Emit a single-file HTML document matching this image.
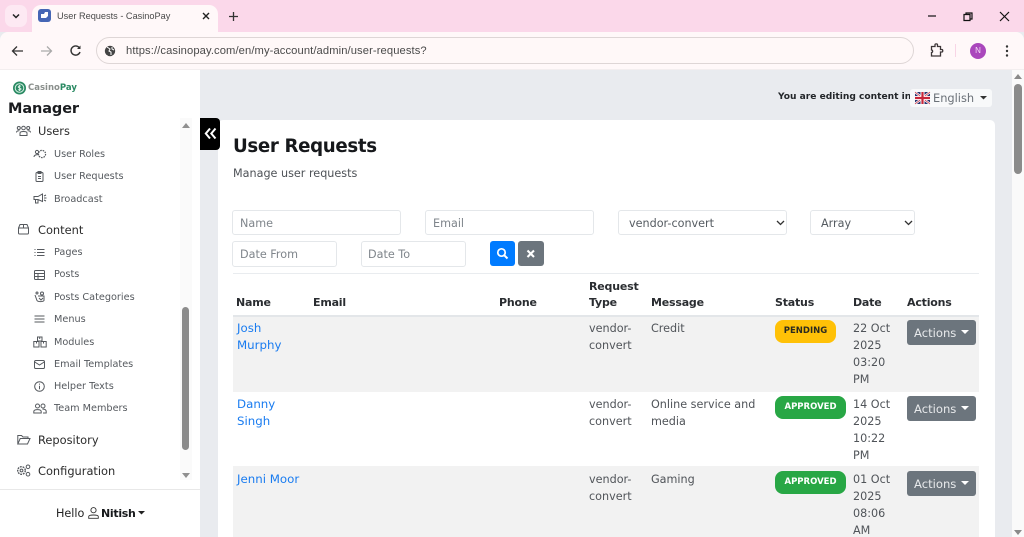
<!DOCTYPE html>
<html lang="en"><head><meta charset="utf-8"><title>User Requests - CasinoPay</title>
<style>
html,body{margin:0;padding:0;width:1024px;height:537px;overflow:hidden;background:#e9ebef}
*{box-sizing:border-box}
body{font-family:"DejaVu Sans","Liberation Sans",sans-serif;color:#4b4f54;position:relative}
.a{position:absolute}
.t{position:absolute;white-space:nowrap;line-height:1}
.lib{font-family:"Liberation Sans",sans-serif}
.s{position:absolute;white-space:nowrap;font-size:9.7px;line-height:12px;color:#55595e;left:54px;margin-top:1px}
.m{position:absolute;white-space:nowrap;font-size:11.4px;line-height:14px;color:#2b2b2b;left:38px}
.c{position:absolute;white-space:nowrap;font-size:11.2px;line-height:17px;color:#505459}
.l{font-size:11.8px;color:#1a7cf0;left:237px}
.h{position:absolute;white-space:nowrap;font-size:11px;line-height:16px;font-weight:bold;color:#2a2d31;letter-spacing:-.2px;margin-top:1px}
.in{position:absolute;background:#fff;border:1px solid #e4e7ea;border-radius:3px;font-size:11.2px;color:#7f858b;line-height:25px;padding-left:7px;white-space:nowrap}
.badge{position:absolute;left:775px;height:23px;border-radius:8px;font-size:8.5px;font-weight:bold;line-height:22px;text-align:center}
.btn{position:absolute;left:907px;width:69px;height:25px;background:#6c757d;border-radius:3px;color:#e8eaec;font-size:11.6px;line-height:26px;padding-left:7px}
.btn:after{content:"";position:absolute;left:54px;top:10px;border:4px solid transparent;border-top-color:#fff;border-bottom:0}
svg{position:absolute;overflow:visible}
.ic{fill:none;stroke:#55595e;stroke-width:1}
</style></head><body>

<!-- browser chrome -->
<div class="a" style="left:0;top:0;width:1024px;height:32px;background:#fbd8ea"></div>
<div class="a" style="left:0;top:32px;width:1024px;height:37px;background:#fff8f9;border-radius:8px 8px 0 0"></div>
<div class="a" style="left:0;top:69px;width:1024px;height:1px;background:#f3eeef"></div>
<div class="a" style="left:5px;top:5px;width:22px;height:22px;background:#fde9f3;border-radius:7px"></div>
<svg style="left:11px;top:12px" width="10" height="8"><path d="M2 2.5L5 5.5L8 2.5" fill="none" stroke="#222" stroke-width="1.5"/></svg>
<div class="a" style="left:32px;top:5px;width:186px;height:28px;background:#fff8f9;border-radius:9px 9px 0 0"></div>
<div class="a" style="left:38px;top:9px;width:13px;height:13px;background:#4566b5;border-radius:3px"></div>
<svg style="left:40px;top:11px" width="9" height="9"><path d="M1 3h3l1-2h3v4l-2 2H1z" fill="#fff"/></svg>
<div class="t lib" style="left:57px;top:12px;font-size:9.2px;color:#4a4a4a">User Requests - CasinoPay</div>
<svg style="left:201px;top:11px" width="10" height="10"><path d="M2 2L8 8M8 2L2 8" stroke="#222" stroke-width="1.4"/></svg>
<svg style="left:228px;top:11px" width="11" height="11"><path d="M5.5 1V10M1 5.5H10" stroke="#333" stroke-width="1.3"/></svg>
<svg style="left:927px;top:11px" width="85" height="11"><path d="M1 5H9" stroke="#111" stroke-width="1.2"/><path d="M37 3.5h6v6h-6zM39 3.5V2h6v6h-2" fill="none" stroke="#111" stroke-width="1.2"/><path d="M73 1L82 10M82 1L73 10" stroke="#111" stroke-width="1.2"/></svg>
<svg style="left:11px;top:44px" width="80" height="14"><path d="M12 7H2M6 2.5L1.5 7L6 11.5" fill="none" stroke="#333" stroke-width="1.3"/><path d="M30 7H40M36 2.5L40.5 7L36 11.5" fill="none" stroke="#aaa" stroke-width="1.3"/><path d="M68.2 3.6A4.6 4.6 0 1 0 69 8" fill="none" stroke="#333" stroke-width="1.4"/><path d="M69.5 1.5V5H66z" fill="#333"/></svg>
<div class="a" style="left:96px;top:37px;width:818px;height:27px;background:#fff8f8;border:1px solid #ded6d6;border-radius:14px"></div>
<svg style="left:104px;top:45px" width="12" height="12"><circle cx="6" cy="6" r="5.2" fill="#444"/><path d="M3 2l3 2-1 2 2 1v3M8 2v2l2 1" fill="none" stroke="#fff" stroke-width="1"/></svg>
<div class="t lib" style="left:126px;top:46px;font-size:11.2px;letter-spacing:.1px;color:#4a4a4a">https://casinopay.com/en/my-account/admin/user-requests?</div>
<svg style="left:929px;top:43px" width="14" height="15"><path d="M2.5 3.5H6V1.8C6 .6 8.5.6 8.5 1.8V3.5H11.5V6.5H13C14 6.5 14 9 13 9H11.5V13H2.5V9.5C4 9.5 4 7 2.5 7z" fill="none" stroke="#3d3638" stroke-width="1.3"/></svg>
<div class="a" style="left:955px;top:44px;width:1px;height:13px;background:#f8d5e6"></div>
<div class="a" style="left:970px;top:43px;width:16px;height:16px;border-radius:50%;background:#aa47bc;color:#f4dff7;font:8px/16px 'Liberation Sans',sans-serif;text-align:center">N</div>
<svg style="left:1005px;top:45px" width="4" height="12"><circle cx="2" cy="1.5" r="1.2" fill="#333"/><circle cx="2" cy="6" r="1.2" fill="#333"/><circle cx="2" cy="10.5" r="1.2" fill="#333"/></svg>

<!-- page scrollbar -->
<div class="a" style="left:1012px;top:70px;width:12px;height:467px;background:#fafafa"></div>
<svg style="left:1013px;top:73px" width="10" height="7"><path d="M1 6L5 1L9 6z" fill="#8a8a8a"/></svg>
<div class="a" style="left:1014px;top:84px;width:8px;height:90px;background:#8b8b8b;border-radius:4px"></div>
<svg style="left:1013px;top:529px" width="10" height="7"><path d="M1 1L5 6L9 1z" fill="#8a8a8a"/></svg>

<!-- sidebar -->
<div class="a" style="left:0;top:70px;width:200px;height:467px;background:#fff"></div>
<svg style="left:13px;top:81px" width="14" height="14"><circle cx="6.5" cy="7" r="6.5" fill="#2a8a63"/><circle cx="6.5" cy="7" r="4.3" fill="none" stroke="#d6efe3" stroke-width="1"/><path d="M8 5.3C7 4.5 5.2 4.8 5.2 6C5.2 7.4 8 6.6 8 8C8 9.2 6 9.4 5 8.6M6.5 4V10" fill="none" stroke="#e8f7f0" stroke-width=".8"/></svg>
<div class="t" style="left:28px;top:84px;font-size:8.5px;font-weight:bold;color:#8a8f8c">Casino<span style="color:#2a8a63">Pay</span></div>
<div class="t" style="left:8px;top:102px;font-size:14.5px;font-weight:bold;color:#1a1c1f;letter-spacing:-.1px">Manager</div>

<div class="a" style="left:180px;top:118px;width:12px;height:362px;background:#fafafa"></div>
<svg style="left:181px;top:122px" width="10" height="7"><path d="M1 6L5 1L9 6z" fill="#8f8f8f"/></svg>
<div class="a" style="left:182px;top:307px;width:7px;height:143px;background:#8b8b8b;border-radius:4px"></div>
<svg style="left:181px;top:472px" width="10" height="7"><path d="M1 1L5 6L9 1z" fill="#8f8f8f"/></svg>

<svg style="left:16px;top:125px" width="15" height="12" class="ic"><circle cx="7.5" cy="3" r="1.8"/><circle cx="2.8" cy="3" r="1.5"/><circle cx="12.2" cy="3" r="1.5"/><path d="M4 10.5V8C4 6 11 6 11 8V10.5zM.5 7.5C.5 6 2 5.6 3.5 5.8M14.5 7.5C14.5 6 13 5.6 11.5 5.8"/></svg>
<div class="m" style="top:124px">Users</div>
<svg style="left:33px;top:149px" width="14" height="10" class="ic"><circle cx="9" cy="5" r="3.6" stroke-dasharray="1.6 .9" stroke-width="1.2"/><circle cx="4" cy="3" r="1.6"/><path d="M1 8C1 6 4 5 6 6"/></svg>
<div class="s" style="top:148px">User Roles</div>
<svg style="left:35px;top:171px" width="9" height="11" class="ic"><rect x="1" y="1.5" width="7" height="9" rx="1"/><rect x="3" y=".5" width="3" height="2" fill="#55595e"/><path d="M3 5.5H6M3 7.5H6"/></svg>
<div class="s" style="top:170px">User Requests</div>
<svg style="left:33px;top:193px" width="14" height="11" class="ic"><path d="M1 3.5H5L9.5 1V8.5L5 6.5H1zM2.5 6.5V10H5V7M11 3L13 2M11 5H13.5M11 7L13 8"/></svg>
<div class="s" style="top:193px">Broadcast</div>

<svg style="left:17px;top:223px" width="13" height="12" class="ic"><path d="M1.5 5V10C1.5 10.8 2 11 2.5 11H10.5C11 11 11.5 10.8 11.5 10V5L10 1.5H3zM1.5 5H11.5M6.5 1.5V5"/></svg>
<div class="m" style="top:223px">Content</div>
<svg style="left:34px;top:248px" width="11" height="9" class="ic"><path d="M3 1.5H10.5M3 4.5H10.5M3 7.5H10.5M.5 1.5H1.5M.5 4.5H1.5M.5 7.5H1.5"/></svg>
<div class="s" style="top:246px">Pages</div>
<svg style="left:34px;top:270px" width="11" height="10" class="ic"><rect x=".5" y=".5" width="10" height="9" rx="1"/><path d="M.5 3.5H10.5M.5 6.5H10.5M4 3.5V9.5"/></svg>
<div class="s" style="top:268px">Posts</div>
<svg style="left:34px;top:291px" width="12" height="12" class="ic"><path d="M1 4L3 9.5C4 11 9 11 10 9.5V5H4"/><circle cx="8" cy="2.5" r="1.5"/><circle cx="3" cy="2" r="1"/><path d="M5 7L7 9L9 7"/></svg>
<div class="s" style="top:291px">Posts Categories</div>
<svg style="left:34px;top:315px" width="11" height="8" class="ic"><path d="M.5 1H10.5M.5 4H10.5M.5 7H10.5"/></svg>
<div class="s" style="top:313px">Menus</div>
<svg style="left:33px;top:336px" width="14" height="12" class="ic"><path d="M4.5 1H9V5H4.5zM.8 5.5H6V11H.8zM8 5.5H13.2V11H8zM6.7 1V3M3.5 5.5V7.5M10.5 5.5V7.5"/></svg>
<div class="s" style="top:336px">Modules</div>
<svg style="left:34px;top:360px" width="11" height="9" class="ic"><rect x=".5" y=".5" width="10" height="8" rx="1.3"/><path d="M.8 2L5.5 5L10.2 2"/></svg>
<div class="s" style="top:358px">Email Templates</div>
<svg style="left:34px;top:381px" width="11" height="11" class="ic"><circle cx="5.5" cy="5.5" r="4.8"/><path d="M5.5 4.8V8.3M5.5 2.6V3.6"/></svg>
<div class="s" style="top:380px">Helper Texts</div>
<svg style="left:33px;top:403px" width="14" height="11" class="ic"><circle cx="4.5" cy="3" r="2"/><circle cx="10" cy="3" r="2"/><path d="M.8 10V8.5C.8 6 8.2 6 8.2 8.5V10zM9.5 6.2C12 6 13.2 7 13.2 8.5V10H10"/></svg>
<div class="s" style="top:402px">Team Members</div>

<svg style="left:17px;top:434px" width="14" height="11" class="ic"><path d="M.8 10V1.5H4.5L6 3H11V4.5M.8 10H10.5L13 4.5H3.2z"/></svg>
<div class="m" style="top:433px">Repository</div>
<svg style="left:16px;top:464px" width="15" height="13" class="ic"><circle cx="5.5" cy="6.5" r="3.8" stroke-dasharray="1.8 .9" stroke-width="1.4"/><circle cx="5.5" cy="6.5" r="1.4"/><circle cx="12" cy="2.8" r="1.8"/><circle cx="12" cy="10.2" r="1.8"/></svg>
<div class="m" style="top:464px">Configuration</div>

<div class="a" style="left:0;top:489px;width:200px;height:1px;background:#e8e8e8"></div>
<div class="t" style="left:56px;top:508px;font-size:11.2px;color:#222">Hello</div>
<svg style="left:88px;top:507px" width="11" height="12" fill="none" stroke="#333" stroke-width=".9"><circle cx="5.5" cy="3.2" r="2.6"/><path d="M.7 11.3V9.5C.7 7.5 10.3 7.5 10.3 9.5V11.3z"/></svg>
<div class="t" style="left:101px;top:508px;font-size:11px;font-weight:bold;color:#16181a;letter-spacing:-.3px">Nitish</div>
<svg style="left:138px;top:511px" width="7" height="4"><path d="M0 0H7L3.5 3.5z" fill="#222"/></svg>

<!-- language -->
<div class="t" style="left:778px;top:93px;font-size:9.1px;font-weight:bold;color:#23262a">You are editing content in</div>
<div class="a" style="left:910px;top:89px;width:82px;height:18px;background:#f8f9fa;border-radius:3px"></div>
<svg style="left:915px;top:92px" width="15" height="12" viewBox="0 0 15 12"><rect width="15" height="12" fill="#27346f"/><path d="M0 0L15 12M15 0L0 12" stroke="#fff" stroke-width="2.4"/><path d="M0 0L15 12M15 0L0 12" stroke="#c8263a" stroke-width=".8"/><path d="M7.5 0V12M0 6H15" stroke="#fff" stroke-width="4"/><path d="M7.5 0V12M0 6H15" stroke="#c8263a" stroke-width="2.2"/></svg>
<div class="t" style="left:933px;top:93px;font-size:11.4px;color:#6b7178">English</div>
<svg style="left:980px;top:96px" width="7" height="4"><path d="M0 0H7L3.5 3.5z" fill="#333"/></svg>

<!-- card -->
<div class="a" style="left:218px;top:120px;width:777px;height:417px;background:#fff;border-radius:5px 5px 0 0"></div>
<div class="t" style="left:233px;top:138px;font-size:18.2px;font-weight:bold;color:#16181b;letter-spacing:-.35px">User Requests</div>
<div class="t" style="left:233px;top:168px;font-size:11.2px;color:#4e5257">Manage user requests</div>

<!-- collapse toggle -->
<div class="a" style="left:200px;top:118px;width:20px;height:32px;background:#000;border-radius:0 4px 4px 0"></div>
<svg style="left:204px;top:127px" width="13" height="13"><path d="M6 1.5L1.8 6.5L6 11.5M11.5 1.5L7.3 6.5L11.5 11.5" fill="none" stroke="#fff" stroke-width="2"/></svg>

<div class="in" style="left:232px;top:210px;width:169px;height:25px">Name</div>
<div class="in" style="left:425px;top:210px;width:169px;height:25px">Email</div>
<div class="in" style="left:618px;top:210px;width:169px;height:25px;color:#555b61;padding-left:10px">vendor-convert</div>
<svg style="left:776px;top:220px" width="9" height="6"><path d="M1 1L4.5 4.5L8 1" fill="none" stroke="#333" stroke-width="1.3"/></svg>
<div class="in" style="left:810px;top:210px;width:105px;height:25px;color:#555b61;padding-left:10px">Array</div>
<svg style="left:904px;top:220px" width="9" height="6"><path d="M1 1L4.5 4.5L8 1" fill="none" stroke="#333" stroke-width="1.3"/></svg>
<div class="in" style="left:232px;top:241px;width:105px;height:26px">Date From</div>
<div class="in" style="left:361px;top:241px;width:105px;height:26px;padding-left:6px">Date To</div>
<div class="a" style="left:490px;top:241px;width:25px;height:25px;background:#007bff;border-radius:3px"></div>
<svg style="left:496px;top:247px" width="13" height="13"><circle cx="5.5" cy="5.5" r="3.7" fill="none" stroke="#fff" stroke-width="1.7"/><path d="M8.3 8.3L11.5 11.5" stroke="#fff" stroke-width="2"/></svg>
<div class="a" style="left:518px;top:241px;width:26px;height:25px;background:#6c757d;border-radius:3px"></div>
<svg style="left:526px;top:249px" width="10" height="10"><path d="M1.5 1.5L8 8M8 1.5L1.5 8" stroke="#fff" stroke-width="2.1"/></svg>
<div class="a" style="left:233px;top:273px;width:746px;height:1px;background:#e9ecef"></div>

<!-- table head -->
<div class="h" style="left:236px;top:294px">Name</div>
<div class="h" style="left:313px;top:294px">Email</div>
<div class="h" style="left:499px;top:294px">Phone</div>
<div class="h" style="left:589px;top:278px">Request<br>Type</div>
<div class="h" style="left:651px;top:294px">Message</div>
<div class="h" style="left:775px;top:294px">Status</div>
<div class="h" style="left:853px;top:294px">Date</div>
<div class="h" style="left:907px;top:294px">Actions</div>
<div class="a" style="left:233px;top:315px;width:746px;height:2px;background:#e3e6e9"></div>

<!-- rows -->
<div class="a" style="left:233px;top:317px;width:746px;height:75px;background:#f2f2f2"></div>
<div class="a" style="left:233px;top:466px;width:746px;height:71px;background:#f2f2f2"></div>

<div class="c l" style="top:320px">Josh<br>Murphy</div>
<div class="c" style="left:589px;top:320px">vendor-<br>convert</div>
<div class="c" style="left:651px;top:320px">Credit</div>
<div class="badge" style="top:320px;width:61px;background:#ffc107;color:#2b2b20">PENDING</div>
<div class="c" style="left:853px;top:320px">22 Oct<br>2025<br>03:20<br>PM</div>
<div class="btn" style="top:320px">Actions</div>

<div class="c l" style="top:396px">Danny<br>Singh</div>
<div class="c" style="left:589px;top:396px">vendor-<br>convert</div>
<div class="c" style="left:651px;top:396px">Online service and<br>media</div>
<div class="badge" style="top:396px;width:71px;background:#28a745;color:#fff">APPROVED</div>
<div class="c" style="left:853px;top:396px">14 Oct<br>2025<br>10:22<br>PM</div>
<div class="btn" style="top:396px">Actions</div>

<div class="c l" style="top:471px">Jenni Moor</div>
<div class="c" style="left:589px;top:471px">vendor-<br>convert</div>
<div class="c" style="left:651px;top:471px">Gaming</div>
<div class="badge" style="top:471px;width:71px;background:#28a745;color:#fff">APPROVED</div>
<div class="c" style="left:853px;top:471px">01 Oct<br>2025<br>08:06<br>AM</div>
<div class="btn" style="top:471px">Actions</div>

</body></html>
